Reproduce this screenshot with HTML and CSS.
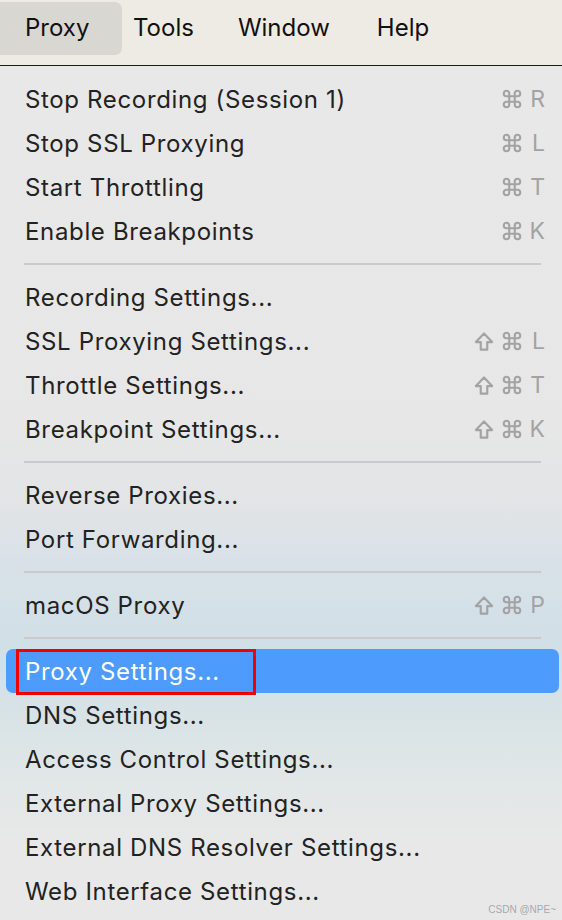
FILE: index.html
```html
<!DOCTYPE html>
<html>
<head>
<meta charset="utf-8">
<link rel="stylesheet" href="styles.css">
</head>
<body>
<div class="menubar">
  <div class="mb-item active">Proxy</div>
  <div class="mb-item tools">Tools</div>
  <div class="mb-item window">Window</div>
  <div class="mb-item help">Help</div>
</div>
<div class="menu">
  <div class="row"><span class="label">Stop Recording (Session 1)</span><span class="sc"><svg class="cmd" viewBox="0 0 24 24"><path d="M15 6v12a3 3 0 1 0 3-3H6a3 3 0 1 0 3 3V6a3 3 0 1 0-3 3h12a3 3 0 1 0-3-3"/></svg><span class="key">R</span></span></div>
  <div class="row"><span class="label">Stop SSL Proxying</span><span class="sc"><svg class="cmd" viewBox="0 0 24 24"><path d="M15 6v12a3 3 0 1 0 3-3H6a3 3 0 1 0 3 3V6a3 3 0 1 0-3 3h12a3 3 0 1 0-3-3"/></svg><span class="key">L</span></span></div>
  <div class="row"><span class="label">Start Throttling</span><span class="sc"><svg class="cmd" viewBox="0 0 24 24"><path d="M15 6v12a3 3 0 1 0 3-3H6a3 3 0 1 0 3 3V6a3 3 0 1 0-3 3h12a3 3 0 1 0-3-3"/></svg><span class="key">T</span></span></div>
  <div class="row"><span class="label">Enable Breakpoints</span><span class="sc"><svg class="cmd" viewBox="0 0 24 24"><path d="M15 6v12a3 3 0 1 0 3-3H6a3 3 0 1 0 3 3V6a3 3 0 1 0-3 3h12a3 3 0 1 0-3-3"/></svg><span class="key">K</span></span></div>
  <div class="sep"></div>
  <div class="row"><span class="label">Recording Settings...</span></div>
  <div class="row"><span class="label">SSL Proxying Settings...</span><span class="sc"><svg class="shift" viewBox="0 0 24 24"><path d="M9 20v-7H4.5L12 5l7.5 8H15v7z"/></svg><svg class="cmd" viewBox="0 0 24 24"><path d="M15 6v12a3 3 0 1 0 3-3H6a3 3 0 1 0 3 3V6a3 3 0 1 0-3 3h12a3 3 0 1 0-3-3"/></svg><span class="key">L</span></span></div>
  <div class="row"><span class="label">Throttle Settings...</span><span class="sc"><svg class="shift" viewBox="0 0 24 24"><path d="M9 20v-7H4.5L12 5l7.5 8H15v7z"/></svg><svg class="cmd" viewBox="0 0 24 24"><path d="M15 6v12a3 3 0 1 0 3-3H6a3 3 0 1 0 3 3V6a3 3 0 1 0-3 3h12a3 3 0 1 0-3-3"/></svg><span class="key">T</span></span></div>
  <div class="row"><span class="label">Breakpoint Settings...</span><span class="sc"><svg class="shift" viewBox="0 0 24 24"><path d="M9 20v-7H4.5L12 5l7.5 8H15v7z"/></svg><svg class="cmd" viewBox="0 0 24 24"><path d="M15 6v12a3 3 0 1 0 3-3H6a3 3 0 1 0 3 3V6a3 3 0 1 0-3 3h12a3 3 0 1 0-3-3"/></svg><span class="key">K</span></span></div>
  <div class="sep"></div>
  <div class="row"><span class="label">Reverse Proxies...</span></div>
  <div class="row"><span class="label">Port Forwarding...</span></div>
  <div class="sep"></div>
  <div class="row"><span class="label">macOS Proxy</span><span class="sc"><svg class="shift" viewBox="0 0 24 24"><path d="M9 20v-7H4.5L12 5l7.5 8H15v7z"/></svg><svg class="cmd" viewBox="0 0 24 24"><path d="M15 6v12a3 3 0 1 0 3-3H6a3 3 0 1 0 3 3V6a3 3 0 1 0-3 3h12a3 3 0 1 0-3-3"/></svg><span class="key">P</span></span></div>
  <div class="sep"></div>
  <div class="row selected"><span class="label">Proxy Settings...</span><span class="redbox"></span></div>
  <div class="row"><span class="label">DNS Settings...</span></div>
  <div class="row"><span class="label">Access Control Settings...</span></div>
  <div class="row"><span class="label">External Proxy Settings...</span></div>
  <div class="row"><span class="label">External DNS Resolver Settings...</span></div>
  <div class="row"><span class="label">Web Interface Settings...</span></div>
  <div class="watermark">CSDN @NPE~</div>
</div>
</body>
</html>
```
FILE: styles.css
```css
* { box-sizing: border-box; }
html, body {
  margin: 0;
  padding: 0;
  width: 562px;
  height: 920px;
  overflow: hidden;
  font-family: Inter, "Liberation Sans", sans-serif;
}
.menubar {
  height: 66px;
  background: #eeebe5;
  border-bottom: 1px solid #1c1c1c;
  display: flex;
  align-items: flex-start;
  padding-top: 2px;
}
.mb-item {
  height: 53px;
  display: flex;
  align-items: center;
  font-size: 24px;
  color: #111;
  padding-bottom: 2px;
}
.mb-item.active {
  width: 122px;
  padding-left: 25px;
  background: #d9d7d1;
  border-radius: 0 7px 7px 0;
}
.mb-item.tools { margin-left: 11px; }
.mb-item.window { margin-left: 44px; }
.mb-item.help { margin-left: 47px; }
.menu {
  position: relative;
  height: 854px;
  padding-top: 11px;
  background: linear-gradient(180deg, #e8e8e8 0px, #e7e7e7 360px, #e2e4e6 440px, #d8e1e8 500px, #d1dfe7 580px, #d8e3e6 650px, #e2e7e7 720px, #e8e8e8 780px, #e8e8e8 100%);
}
.row {
  height: 44px;
  display: flex;
  align-items: center;
  justify-content: space-between;
  padding: 0 17px 0 25px;
  font-size: 24px;
  letter-spacing: 0.65px;
  color: #222;
}
.row.selected {
  position: relative;
  margin: 0 3px 0 6px;
  padding-left: 19px;
  background: #4d9bfd;
  border-radius: 7px;
  color: #fff;
}
.redbox {
  position: absolute;
  left: 10px;
  top: 0;
  width: 240px;
  height: 46px;
  border: 3px solid #f20000;
}
.sep {
  height: 22px;
  display: flex;
  align-items: center;
  padding: 0 21px 0 24px;
}
.sep::before {
  content: "";
  flex: 1;
  height: 2px;
  background: #cacaca;
}
.sc {
  display: flex;
  align-items: center;
  color: #a3a3a3;
  letter-spacing: 0;
}
.sc svg {
  fill: none;
  stroke: #a3a3a3;
}
.shift {
  width: 26px;
  height: 26px;
  stroke-width: 2;
  stroke-linejoin: round;
  margin-right: 4px;
}
.cmd {
  width: 22px;
  height: 22px;
  stroke-width: 2.3;
}
.key {
  width: 22px;
  text-align: right;
  font-size: 23px;
}
.watermark {
  position: absolute;
  right: 6px;
  bottom: 5px;
  font-size: 10px;
  color: #a8a8a8;
  font-family: "Liberation Sans", sans-serif;
}
```
